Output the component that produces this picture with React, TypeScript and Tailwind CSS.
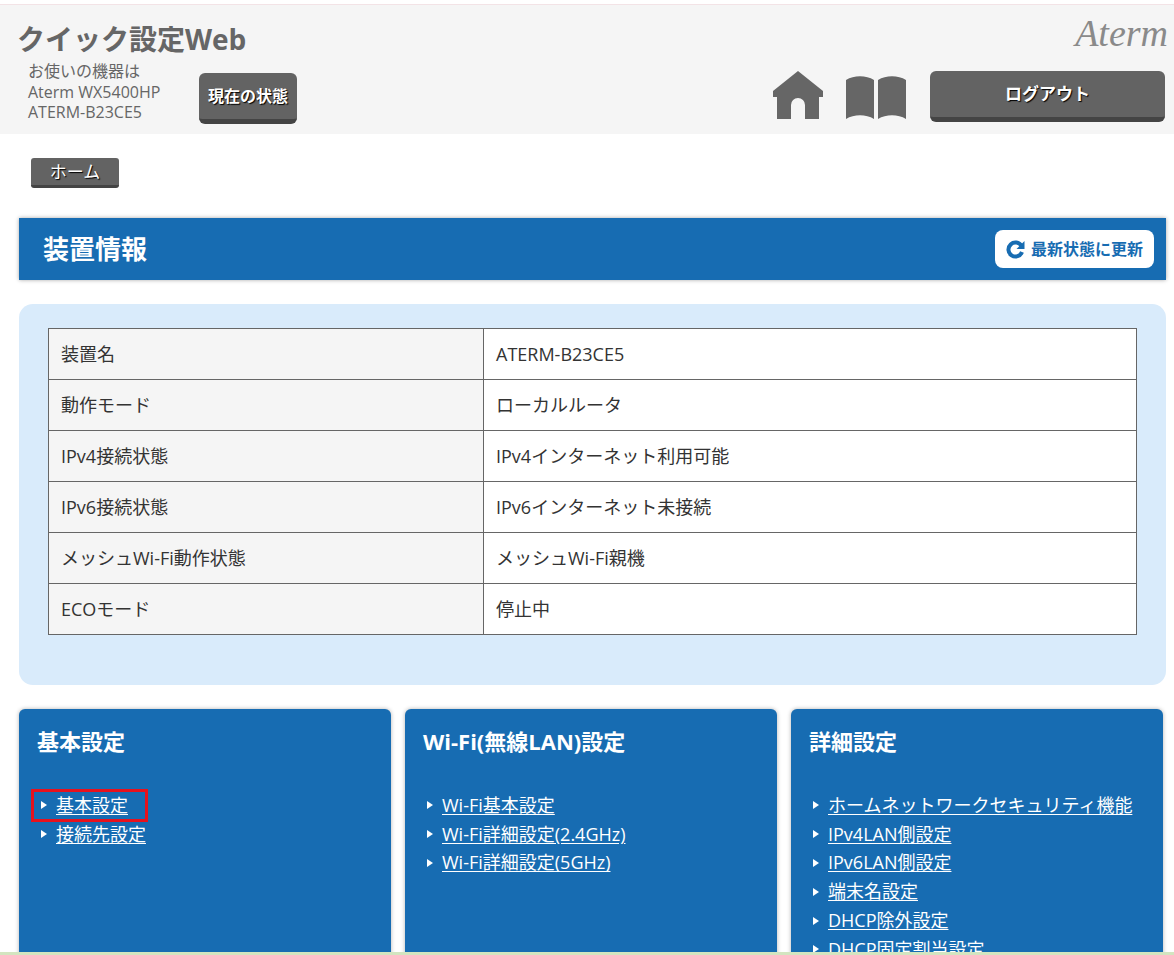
import React from "react";

const font = "font-['Open_Sans','Noto_Sans_CJK_JP',sans-serif]";

const rows = [
	["装置名", "ATERM-B23CE5"],
	["動作モード", "ローカルルータ"],
	["IPv4接続状態", "IPv4インターネット利用可能"],
	["IPv6接続状態", "IPv6インターネット未接続"],
	["メッシュWi-Fi動作状態", "メッシュWi-Fi親機"],
	["ECOモード", "停止中"],
];

const Triangle = () => (
	<span className="mr-[9px] ml-[22px] h-0 w-0 border-y-[4px] border-l-[6px] border-y-transparent border-l-white" />
);

const MenuCard = ({ title, links }: { title: string; links: string[] }) => {
	return (
		<div className="h-[300px] w-[372px] shrink-0 rounded-md bg-[#176cb2] pt-[17px] shadow-[0_0_4px_rgba(0,0,0,0.3)]">
			<h2 className="pl-[18px] text-[22px] leading-[30px] font-bold text-white">{title}</h2>
			<ul className="mt-[35px]">
				{links.map((link) => (
					<li key={link} className="flex h-[28.8px] items-center text-[18px] text-white">
						<Triangle />
						<a className="underline underline-offset-2">{link}</a>
					</li>
				))}
			</ul>
		</div>
	);
};

const App = () => {
	return (
		<div className={`relative h-[955px] w-[1174px] overflow-hidden bg-white text-[#333] ${font}`}>
			<div className="h-[5px] border-b border-[#f3e3e6] bg-white" />
			<header className="flex h-[129px] bg-[#f5f5f5]">
				<div className="pt-[15px] pl-[17px]">
					<h1 className="text-[28px] leading-[38px] font-bold text-[#666]">クイック設定Web</h1>
					<div className="flex">
						<div className="mt-[3px] ml-[11px] w-[171px] text-[16px] leading-[20.5px] text-[#666]">
							<p>お使いの機器は</p>
							<p>Aterm WX5400HP</p>
							<p>ATERM-B23CE5</p>
						</div>
						<button className="mt-[15px] h-[51px] w-[98px] rounded-md border-b-[5px] border-[#444] bg-[#636363] text-[16px] font-bold text-white [text-shadow:1px_1px_1px_#000]">
							現在の状態
						</button>
					</div>
				</div>
				<div className="ml-auto flex flex-col items-end pr-[6px]">
					<span className="mt-[9px] h-[38px] font-['Liberation_Serif',serif] text-[38px] leading-[38px] text-[#8a8a8a] italic">
						Aterm
					</span>
					<div className="mt-[19px] mr-[3px] flex items-start">
						<svg width="50" height="48" viewBox="0 0 50 48" className="mr-[23px]" fill="#666">
							<path d="M25 0 50 20v6h-4v22H32V34a7 7 0 0 0-14 0v14H4V26H0v-6z" />
						</svg>
						<svg width="60" height="44" viewBox="0 0 60 44" className="mt-[4px] mr-[24px]" fill="#666">
							<path d="M0 5C8 0 20 0 28 5v39C20 39 8 39 0 44zM32 5c8-5 20-5 28 0v39c-8-5-20-5-28 0z" />
						</svg>
						<button className="h-[51px] w-[235px] rounded-md border-b-[5px] border-[#444] bg-[#636363] text-[17px] font-bold text-white [text-shadow:1px_1px_1px_#000]">
							ログアウト
						</button>
					</div>
				</div>
			</header>

			<main className="px-[19px]">
				<div className="pt-[24px] pl-[12px]">
					<button className="h-[30px] w-[88px] rounded-[3px] border-b-[3px] border-[#444] bg-[#636363] text-[17px] leading-none text-white [text-shadow:1px_1px_1px_#000]">
						ホーム
					</button>
				</div>

				<div className="mt-[30px] flex h-[62px] w-[1147px] items-center justify-between bg-[#176cb2] pr-[12px] pl-[24px] shadow-[0_0_4px_rgba(0,0,0,0.35)]">
					<h2 className="text-[26px] font-bold text-white">装置情報</h2>
					<button className="flex h-[38px] w-[159px] items-center justify-center gap-[6px] rounded-lg bg-white text-[16px] font-bold text-[#176cb2]">
						<svg width="19" height="19" viewBox="0 0 19 19" fill="none" stroke="#176cb2" strokeWidth="4">
							<path d="M15.5 6A7 7 0 1 0 16 12" />
							<path d="M18.5 1v8h-8z" fill="#176cb2" stroke="none" />
						</svg>
						最新状態に更新
					</button>
				</div>

				<section className="mt-[24px] h-[381px] w-[1147px] rounded-[14px] bg-[#d9ebfb] px-[29px] pt-[24px]">
					<table className="w-[1089px] border-collapse text-[18px] text-[#333]">
						<tbody>
							{rows.map(([label, value]) => (
								<tr key={label} className="h-[51px]">
									<td className="w-[435px] border border-[#666] bg-[#f5f5f5] pl-[12px]">{label}</td>
									<td className="border border-[#666] bg-white pl-[12px]">{value}</td>
								</tr>
							))}
						</tbody>
					</table>
				</section>

				<div className="mt-[24px] flex gap-[14px]">
					<div className="relative">
						<MenuCard title="基本設定" links={["基本設定", "接続先設定"]} />
						<div className="absolute top-[80px] left-[12px] h-[33px] w-[117px] border-[3px] border-[#e6121d]" />
					</div>
					<MenuCard
						title="Wi-Fi(無線LAN)設定"
						links={["Wi-Fi基本設定", "Wi-Fi詳細設定(2.4GHz)", "Wi-Fi詳細設定(5GHz)"]}
					/>
					<MenuCard
						title="詳細設定"
						links={[
							"ホームネットワークセキュリティ機能",
							"IPv4LAN側設定",
							"IPv6LAN側設定",
							"端末名設定",
							"DHCP除外設定",
							"DHCP固定割当設定",
						]}
					/>
				</div>
			</main>
			<div className="absolute right-0 bottom-0 left-0 h-[3px] bg-[#d3e5c0]" />
		</div>
	);
};

export default App;
